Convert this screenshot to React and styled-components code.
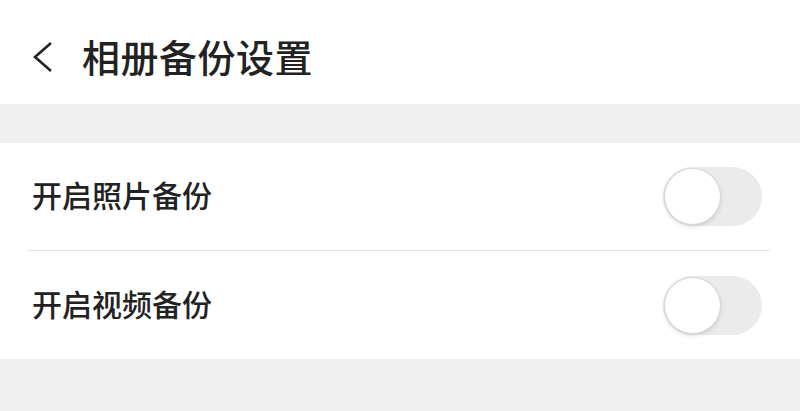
import React, { useState } from "react";
import styled, { createGlobalStyle } from "styled-components";

const Global = createGlobalStyle`
  html, body { margin: 0; padding: 0; background: #efefef; }
  body { font-family: "Noto Sans CJK SC", "Noto Sans", sans-serif; }
`;

const Page = styled.div`
  width: 800px;
  height: 411px;
  background: #efefef;
  display: flex;
  flex-direction: column;
  overflow: hidden;
`;

const Header = styled.header`
  height: 104px;
  background: #fff;
  display: flex;
  align-items: center;
  padding-left: 31px;
  box-sizing: border-box;
`;

const BackButton = styled.button`
  border: none;
  background: none;
  padding: 0;
  width: 24px;
  height: 34px;
  display: flex;
  align-items: center;
  justify-content: center;
  margin-right: 27px;
  margin-top: 10px;
  cursor: pointer;
`;

const Title = styled.h1`
  margin: 0;
  font-size: 38px;
  font-weight: 500;
  color: #222;
  line-height: 1;
  margin-top: 7px;
  letter-spacing: 0.5px;
`;

const Spacer = styled.div`
  height: 39px;
`;

const Section = styled.section`
  background: #fff;
  padding: 0 30px 0 28px;
`;

const Row = styled.div`
  height: ${(p) => p.$h}px;
  display: flex;
  align-items: center;
  justify-content: space-between;
  border-bottom: ${(p) => (p.$divider ? "1px solid #e2e2e2" : "none")};
  padding-left: 4px;
`;

const Label = styled.span`
  font-size: 30px;
  font-weight: 500;
  color: #222;
  line-height: 1;
  margin-top: -5px;
`;

const Track = styled.button`
  position: relative;
  width: 99px;
  height: 59px;
  border-radius: 30px;
  border: none;
  padding: 0;
  background: ${(p) => (p.$on ? "#4cd964" : "#ebebeb")};
  cursor: pointer;
  margin-right: 8px;
`;

const Knob = styled.span`
  position: absolute;
  top: 1px;
  left: ${(p) => (p.$on ? "41px" : "1px")};
  width: 57px;
  height: 57px;
  border-radius: 50%;
  background: #fff;
  box-sizing: border-box;
  border: 1px solid #d6d6d6;
  box-shadow: 0 2px 4px rgba(0, 0, 0, 0.12);
`;

function Toggle() {
  const [on, setOn] = useState(false);
  return (
    <Track $on={on} onClick={() => setOn(!on)}>
      <Knob $on={on} />
    </Track>
  );
}

export default function App() {
  return (
    <>
      <Global />
      <Page>
        <Header>
          <BackButton aria-label="返回">
            <svg width="22" height="32" viewBox="0 0 22 32">
              <path d="M19 2 L3 16 L19 30" fill="none" stroke="#222" strokeWidth="2.6" />
            </svg>
          </BackButton>
          <Title>相册备份设置</Title>
        </Header>
        <Spacer />
        <Section>
          <Row $h={107} $divider>
            <Label>开启照片备份</Label>
            <Toggle />
          </Row>
          <Row $h={108}>
            <Label>开启视频备份</Label>
            <Toggle />
          </Row>
        </Section>
      </Page>
    </>
  );
}
